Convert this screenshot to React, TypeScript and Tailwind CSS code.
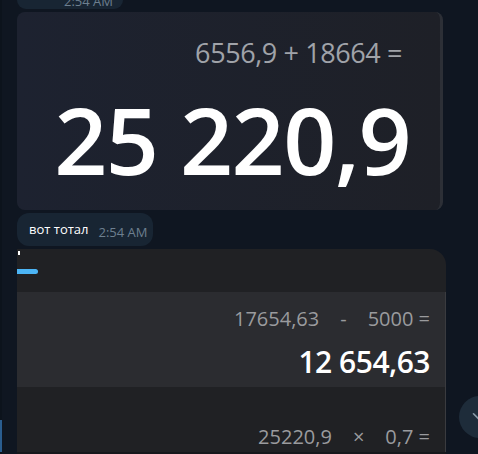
import { ChevronDown } from 'lucide-react';

const font = { fontFamily: '"Open Sans", "Noto Sans", sans-serif' };

export default function App() {
  return (
    <div
      className="relative flex h-[454px] w-[478px] overflow-hidden bg-[#0f1621]"
      style={font}
    >
      {/* sidebar edge */}
      <div className="flex w-[2px] shrink-0 flex-col justify-end bg-[#0c131c] pb-[2px]">
        <div className="h-[32px] w-[2px] bg-[#2a5d8f]" />
      </div>

      <div className="flex flex-1 flex-col pl-[15px]">
        {/* previous bubble tail */}
        <div className="flex h-[9px] w-[106px] items-end justify-end overflow-hidden rounded-b-[10px] bg-[#182533] pr-[10px]">
          <span className="mb-[1px] text-[13px] leading-[13px] text-[#6d7f8f]">2:54 AM</span>
        </div>

        {/* image 1: calculator screenshot */}
        <div className="mt-[3px] flex h-[198px] w-[426px] flex-col items-end rounded-[8px] border-r-[3px] border-[#2c2f36] bg-gradient-to-r from-[#1d2230] to-[#1e2027] pr-[30px]">
          <div className="mr-[8px] mt-[23px] text-[27px] leading-[36px] tracking-[-0.4px] text-[#a0a3a9]">
            6556,9 + 18664 =
          </div>
          <div className="mt-[18px] text-[93px] font-semibold leading-[100px] tracking-[-1.6px] text-white">
            25 220,9
          </div>
        </div>

        {/* text bubble */}
        <div className="mt-[3px] flex h-[33px] w-[136px] items-center rounded-[12px] bg-[#182533] pl-[12px] pt-[1px]">
          <span className="text-[13px] text-white">вот тотал</span>
          <span className="ml-[10px] mt-[5px] text-[13px] text-[#6d7f8f]">2:54 AM</span>
        </div>

        {/* image 2: calculator history */}
        <div className="mt-[3px] flex w-[429px] flex-1 flex-col overflow-hidden rounded-tr-[16px] bg-[#202124]">
          <div className="relative h-[43px]">
            <div className="ml-[1px] mt-[2px] h-[4px] w-[2px] bg-white" />
            <div className="mt-[14px] h-[5px] w-[21px] rounded-r-full bg-[#4cb5f5]" />
          </div>
          <div className="flex h-[95px] flex-col items-end border-r border-[#3a3b3f] bg-[#2b2c30] pr-[15px]">
            <div className="mt-[12px] flex gap-[21px] text-[20px] leading-[30px] text-[#9a9b9e]">
              <span>17654,63</span>
              <span>-</span>
              <span>5000 =</span>
            </div>
            <div className="mt-[8px] text-[30px] font-semibold leading-[40px] tracking-[-0.5px] text-white">
              12 654,63
            </div>
          </div>
          <div className="flex flex-1 flex-col items-end border-r border-[#3a3b3f] pr-[15px]">
            <div className="mt-[35px] flex gap-[21px] text-[20px] leading-[30px] text-[#9a9b9e]">
              <span>25220,9</span>
              <span>×</span>
              <span>0,7 =</span>
            </div>
          </div>
          <div className="h-[2px] bg-[#16181c]" />
        </div>
      </div>

      {/* scroll down button */}
      <div className="absolute left-[459px] top-[396px] flex h-[42px] w-[42px] items-center justify-center rounded-full bg-[#1e2c3a]">
        <ChevronDown className="h-[26px] w-[26px] text-[#8a9aa8]" strokeWidth={1.5} />
      </div>
    </div>
  );
}
